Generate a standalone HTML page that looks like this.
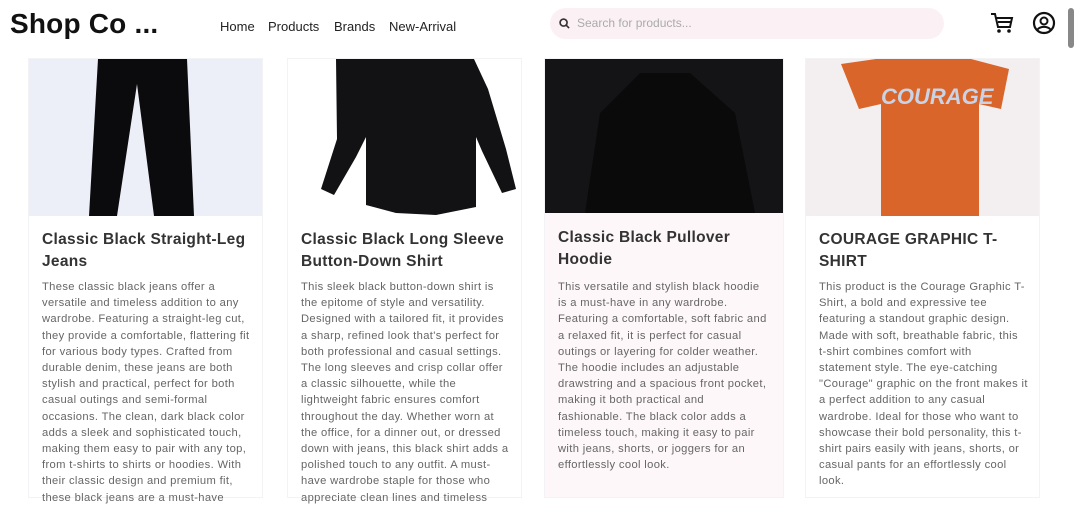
<!DOCTYPE html>
<html><head><meta charset="utf-8"><style>
*{margin:0;padding:0;box-sizing:border-box}
body{width:1080px;height:491px;overflow:hidden;background:#fff;font-family:"Liberation Sans",sans-serif;position:relative}
.logo{position:absolute;left:10px;top:8px;font-size:28px;font-weight:bold;color:#111;letter-spacing:0.2px}
.nav{position:absolute;top:19px;font-size:13px;color:#222}
.search{position:absolute;left:550px;top:8px;width:394px;height:31px;border-radius:16px;background:#fbf1f5}
.search span{position:absolute;left:27px;top:8px;font-size:12px;color:#aaa}
.card{position:absolute;top:58px;height:440px;background:#fff;border:1px solid #f3f3f5}
.img{position:absolute;left:0;top:0;width:100%;overflow:hidden}
.t{position:absolute;left:13px;font-size:15.5px;font-weight:bold;color:#333;line-height:22px;letter-spacing:0.3px}
.d{position:absolute;left:13px;font-size:11.2px;color:#666;line-height:16.2px;letter-spacing:0.35px;white-space:nowrap}
.sb{position:absolute;right:6px;top:8px;width:6px;height:40px;border-radius:3px;background:#888}
</style></head><body>
<div class="logo">Shop Co ...</div>
<div class="nav" style="left:220px">Home</div>
<div class="nav" style="left:268px">Products</div>
<div class="nav" style="left:334px">Brands</div>
<div class="nav" style="left:389px">New-Arrival</div>
<div class="search"><svg style="position:absolute;left:9px;top:10px" width="11" height="11" viewBox="0 0 12 12"><circle cx="5" cy="5" r="3.8" fill="none" stroke="#333" stroke-width="1.8"/><path d="M8 8l3 3" stroke="#333" stroke-width="1.8"/></svg><span>Search for products...</span></div>
<svg style="position:absolute;left:990px;top:12px" width="24" height="22" viewBox="0 0 24 22"><path d="M1 2h4l3 13h12l2-9H6" fill="none" stroke="#111" stroke-width="2"/><path d="M8 10h13" stroke="#111" stroke-width="2"/><circle cx="9" cy="19" r="1.8" fill="#111"/><circle cx="19" cy="19" r="1.8" fill="#111"/></svg>
<svg style="position:absolute;left:1032px;top:11px" width="24" height="24" viewBox="0 0 24 24"><circle cx="12" cy="12" r="10" fill="none" stroke="#111" stroke-width="2.2"/><circle cx="12" cy="10" r="3.5" fill="none" stroke="#111" stroke-width="2"/><path d="M5.5 18.5c3-3.5 10-3.5 13 0" fill="none" stroke="#111" stroke-width="2"/></svg>
<div class="sb"></div>

<div class="card" style="left:28px;width:235px">
<div class="img" style="height:157px;background:#eceef8"><svg width="235" height="157"><path d="M69 0h89l7 157h-40l-17-132-20 132h-28z" fill="#0b0b0d"/></svg></div>
<div class="t" style="top:170px">Classic Black Straight-Leg<br>Jeans</div>
<div class="d" style="top:220px">These classic black jeans offer a<br>versatile and timeless addition to any<br>wardrobe. Featuring a straight-leg cut,<br>they provide a comfortable, flattering fit<br>for various body types. Crafted from<br>durable denim, these jeans are both<br>stylish and practical, perfect for both<br>casual outings and semi-formal<br>occasions. The clean, dark black color<br>adds a sleek and sophisticated touch,<br>making them easy to pair with any top,<br>from t-shirts to shirts or hoodies. With<br>their classic design and premium fit,<br>these black jeans are a must-have</div>
</div>

<div class="card" style="left:287px;width:235px">
<div class="img" style="height:157px;background:#fff"><svg width="235" height="157"><path d="M48 0h138l14 30 18 60 10 40-14 4-20-42-6-14v70l-40 8-40-2-30-8v-68l-10 20-22 38-13-6 16-50z" fill="#121214"/></svg></div>
<div class="t" style="top:170px">Classic Black Long Sleeve<br>Button-Down Shirt</div>
<div class="d" style="top:220px">This sleek black button-down shirt is<br>the epitome of style and versatility.<br>Designed with a tailored fit, it provides<br>a sharp, refined look that's perfect for<br>both professional and casual settings.<br>The long sleeves and crisp collar offer<br>a classic silhouette, while the<br>lightweight fabric ensures comfort<br>throughout the day. Whether worn at<br>the office, for a dinner out, or dressed<br>down with jeans, this black shirt adds a<br>polished touch to any outfit. A must-<br>have wardrobe staple for those who<br>appreciate clean lines and timeless</div>
</div>

<div class="card" style="left:544px;width:240px;background:#fdf7fa">
<div class="img" style="height:154px;background:#141416"><svg width="240" height="154"><path d="M40 154l15-100 40-40 50 0 45 40 20 100z" fill="#0a0a0a"/></svg></div>
<div class="t" style="top:168px">Classic Black Pullover<br>Hoodie</div>
<div class="d" style="top:220px">This versatile and stylish black hoodie<br>is a must-have in any wardrobe.<br>Featuring a comfortable, soft fabric and<br>a relaxed fit, it is perfect for casual<br>outings or layering for colder weather.<br>The hoodie includes an adjustable<br>drawstring and a spacious front pocket,<br>making it both practical and<br>fashionable. The black color adds a<br>timeless touch, making it easy to pair<br>with jeans, shorts, or joggers for an<br>effortlessly cool look.</div>
</div>

<div class="card" style="left:805px;width:235px">
<div class="img" style="height:157px;background:#f3eef0"><svg width="235" height="157"><path d="M35 5l35-5h95l38 10-8 40-22-5v112H75V45l-22 5z" fill="#d9652a"/><text x="75" y="45" font-family="Liberation Sans" font-size="22" font-weight="bold" font-style="italic" fill="#c9d3e6">COURAGE</text></svg></div>
<div class="t" style="top:170px">COURAGE GRAPHIC T-<br>SHIRT</div>
<div class="d" style="top:220px">This product is the Courage Graphic T-<br>Shirt, a bold and expressive tee<br>featuring a standout graphic design.<br>Made with soft, breathable fabric, this<br>t-shirt combines comfort with<br>statement style. The eye-catching<br>"Courage" graphic on the front makes it<br>a perfect addition to any casual<br>wardrobe. Ideal for those who want to<br>showcase their bold personality, this t-<br>shirt pairs easily with jeans, shorts, or<br>casual pants for an effortlessly cool<br>look.</div>
</div>
</body></html>
